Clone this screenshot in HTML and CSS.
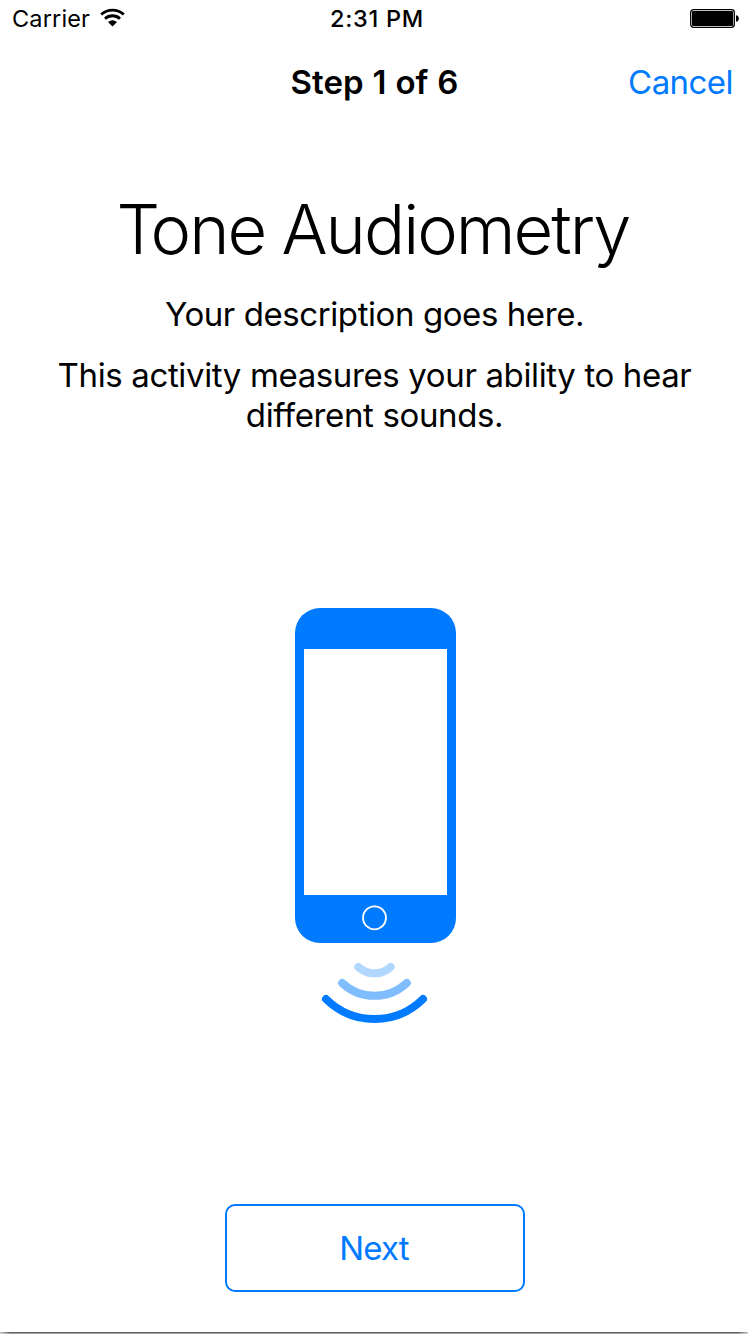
FILE: index.html
```html
<!DOCTYPE html>
<html lang="en">
<head>
<meta charset="utf-8">
<title>Tone Audiometry</title>
<link rel="stylesheet" href="styles.css">
</head>
<body>
<main class="screen">
  <header class="status-bar">
    <div class="network">
      <span class="carrier">Carrier</span>
      <svg class="wifi" width="26" height="20" viewBox="0 0 26 20">
        <path d="M1.2 6.6A16.4 16.4 0 0 1 23.8 6.6M5 10.7A11 11 0 0 1 20 10.7" fill="none" stroke="#000" stroke-width="2.8"/>
        <path d="M8 14.1A7.2 7.2 0 0 1 17 14.1L12.5 18.6Z"/>
      </svg>
    </div>
    <span class="time">2:31 PM</span>
    <svg class="battery" width="49" height="20" viewBox="0 0 49 20">
      <rect x=".7" y=".7" width="43.6" height="17.6" rx="2.8" fill="none" stroke="#000" stroke-width="1.3"/>
      <rect x="2" y="2" width="41" height="15" rx="1"/>
      <path d="M46 6.2Q48.8 6.4 48.8 9.5T46 12.8Z"/>
    </svg>
  </header>
  <nav class="nav-bar">
    <span class="step">Step 1 of 6</span>
    <a class="cancel">Cancel</a>
  </nav>
  <section class="intro">
    <h1 class="title"><span class="title-initial">T</span>one Audiometry</h1>
    <p class="description">Your description goes here.</p>
    <p class="details">This activity measures your ability to hear<br>different sounds.</p>
  </section>
  <svg class="illustration" width="162" height="416" viewBox="295 608 162 416">
    <rect x="295" y="608" width="161" height="335" rx="25" fill="#007aff"/>
    <rect x="304" y="649" width="143" height="246" fill="#fff"/>
    <circle cx="374.5" cy="917.8" r="11.5" fill="none" stroke="#fff" stroke-width="1.8"/>
    <g fill="none" stroke="#007aff" stroke-width="8" stroke-linecap="round">
      <path stroke="#b2d7ff" d="M358.3 967A24 24 0 0 0 390.7 967"/>
      <path stroke="#80bdff" d="M342.2 983A47.1 47.1 0 0 0 406.8 983"/>
      <path d="M326 999A68.8 68.8 0 0 0 423 999"/>
    </g>
  </svg>
  <button class="next">Next</button>
  <div class="bottom-edge"></div>
</main>
</body>
</html>
```
FILE: styles.css
```css
* { box-sizing: border-box; }
body { margin: 0; background: #fff; color: #000; font-family: Inter, "Liberation Sans", sans-serif; }
.screen { width: 748px; height: 1334px; display: flex; flex-direction: column; align-items: center; overflow: hidden; }
.status-bar { width: 100%; height: 40px; display: grid; grid-template-columns: 1fr auto 1fr; padding: 0 9px 0 12px; line-height: 38px; font-size: 24px; }
.network { display: flex; gap: 10px; }
.carrier { font-size: 23.5px; letter-spacing: .15px; }
.wifi { margin-top: 8px; }
.time { margin-left: 3px; font-size: 23.5px; font-weight: 500; letter-spacing: .75px; }
.battery { justify-self: end; margin-top: 9px; }
.nav-bar { width: 100%; height: 88px; padding: 0 15px 0 16px; display: grid; grid-template-columns: 1fr auto 1fr; line-height: 84px; font-size: 33px; }
.step { grid-column: 2; font-weight: 600; letter-spacing: .1px; word-spacing: .4px; }
.cancel { justify-self: end; color: #007aff; letter-spacing: -.55px; }
.intro { text-align: center; white-space: nowrap; padding-left: 1px; }
.title { margin: 58px 0 0; padding-right: 3px; font-size: 68.5px; line-height: 88px; font-weight: 300; letter-spacing: -2px; word-spacing: -1px; }
.title-initial { letter-spacing: -9.5px; }
.description, .details { margin: 0; font-size: 33px; line-height: 40px; letter-spacing: -.37px; }
.description { margin-top: 20px; letter-spacing: -.42px; }
.details { margin-top: 21px; }
.illustration { display: block; margin: 173px 0 0 4px; }
.next { margin: 180px 0 0 2px; width: 300px; height: 88px; padding: 0 2px 0 0; border: 2px solid #007aff; border-radius: 10px; background: #fff; color: #007aff; font: 400 33px/84px Inter, sans-serif; letter-spacing: -.8px; }
.bottom-edge { width: 100%; height: 2px; margin-top: auto; background: linear-gradient(90deg, #fff9, #fff0 10px calc(100% - 10px), #fff9), linear-gradient(#606064 50%, #a2a2a4 50%); }
```
